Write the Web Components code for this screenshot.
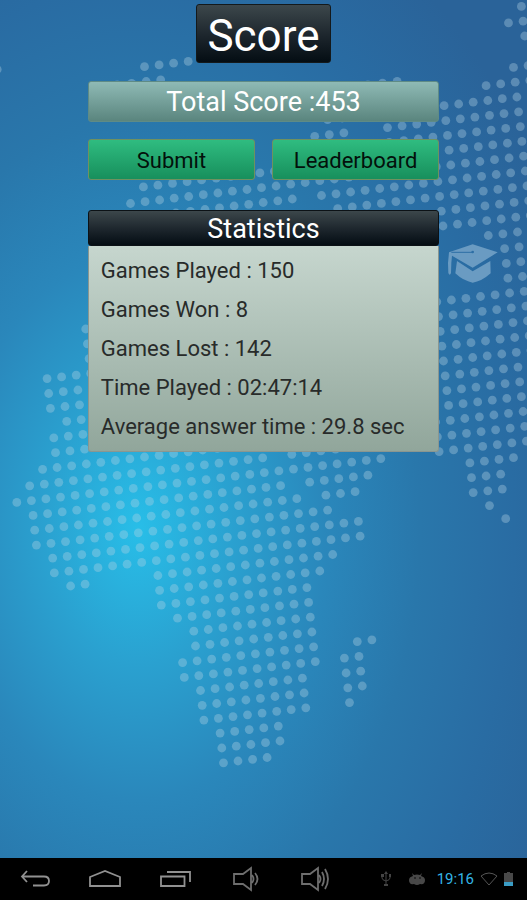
<!DOCTYPE html>
<html lang="en">
<head>
    <meta charset="UTF-8">
    <meta name="viewport" content="width=device-width, initial-scale=1.0">
    <title>Score</title>
    <style>
        body {
            margin: 0;
            min-height: 100vh;
            display: flex;
            flex-direction: column;
            background: #2a6ea6;
            font-family: Roboto, "Noto Sans", sans-serif;
        }

        score-screen {
            flex: 1;
        }
    </style>
</head>
<body>
    <score-screen>
        <screen-title>Score</screen-title>
        <total-score value="453"></total-score>
        <score-actions>
            <green-button>Submit</green-button>
            <green-button>Leaderboard</green-button>
        </score-actions>
        <stats-card heading="Statistics">
            <stat-row label="Games Played" value="150"></stat-row>
            <stat-row label="Games Won" value="8"></stat-row>
            <stat-row label="Games Lost" value="142"></stat-row>
            <stat-row label="Time Played" value="02:47:14"></stat-row>
            <stat-row label="Average answer time" value="29.8 sec"></stat-row>
        </stats-card>
    </score-screen>
    <system-bar time="19:16"></system-bar>

    <script>
        // rows of the dotted map: [row, first, last, first, last, ...]
        const MAP_ROWS = [
            [-37, -7, -7, 29, 30], [-36, 3, 6, 28, 30], [-35, 1, 4, 29, 30], [-34, 30, 31],
            [-33, 18, 20, 28, 30], [-32, 26, 30], [-31, 15, 16, 23, 30], [-30, 14, 16, 19, 30],
            [-29, 19, 30], [-28, 2, 11, 19, 29], [-27, 1, 29], [-26, 4, 12, 14, 29],
            [-25, 15, 29], [-24, 22, 29], [-23, 22, 29], [-22, 25, 29], [-21, 26, 29],
            [-20, 26, 28], [-19, -3, -3, 26, 28], [-18, -3, -3, 21, 28], [-17, -3, -3, 21, 28],
            [-16, -6, -3, 21, 28], [-15, -6, -4, 21, 28], [-14, -6, -4, 21, 28],
            [-13, -5, -4, 21, 28], [-12, -6, -4, 21, 28], [-11, -6, -3, 20, 27],
            [-10, -7, 6, 20, 27], [-9, -8, 8, 10, 13, 20, 27], [-8, -9, 16, 20, 26],
            [-7, -8, 9, 11, 15, 22, 25], [-6, -8, 10, 12, 14, 22, 24], [-5, -8, 12, 22, 24],
            [-4, -7, 14, 23, 23], [-3, -7, 14, 24, 24], [-2, -6, -5, 0, 12], [-1, 0, 11],
            [0, 0, 10], [1, 1, 10], [2, 2, 10], [3, 2, 10], [4, 1, 10, 13, 14],
            [5, 1, 10, 12, 13], [6, 2, 9, 12, 13], [7, 2, 9, 12, 13], [8, 2, 9, 12, 12],
            [9, 3, 7], [10, 3, 7], [11, 3, 6]
        ];

        function mapDots() {
            let dots = '';
            for (const [row, ...spans] of MAP_ROWS) {
                for (let s = 0; s < spans.length; s += 2) {
                    for (let col = spans[s]; col <= spans[s + 1]; col++) {
                        const x = 161.3 + col * 14.56 + row * 1.68;
                        const y = 605.1 - col * 1.75 + row * 14.81;
                        dots += `<circle cx="${x.toFixed(1)}" cy="${y.toFixed(1)}" r="4.4"/>`;
                    }
                }
            }
            return dots;
        }

        class WorldMap extends HTMLElement {
            constructor() {
                super();
                this.attachShadow({ mode: 'open' });
                this.shadowRoot.innerHTML = `
                <style>
                    :host { display: block; }
                    svg { display: block; width: 100%; height: 100%; }
                </style>
                <svg viewBox="0 0 527 858" preserveAspectRatio="xMidYMid slice" aria-hidden="true">
                    <defs>
                        <radialGradient id="glow" gradientUnits="userSpaceOnUse" cx="0" cy="0" r="1"
                            gradientTransform="translate(138 528) scale(470 680)">
                            <stop offset="0" stop-color="#28bee8"/>
                            <stop offset="0.2" stop-color="#2aa1d0"/>
                            <stop offset="0.4" stop-color="#2a87bb"/>
                            <stop offset="0.6" stop-color="#2977ab"/>
                            <stop offset="0.8" stop-color="#296ca3"/>
                            <stop offset="1" stop-color="#2a6399"/>
                        </radialGradient>
                    </defs>
                    <rect x="-600" y="-600" width="1800" height="2100" fill="url(#glow)"/>
                    <g fill="#b4d2e4" fill-opacity="0.36">${mapDots()}</g>
                    <g transform="translate(440 235) scale(0.3333)">
                        <path fill="#6a9bc2" d="M27 52 98 28 173 52 98 98 36 62 34 84 33 114Q29 124 25 114L24 84Z"/>
                        <path fill="#6a9bc2" d="M51 78 98 109 151 78 152 115Q124 140 98 143 70 138 46 115Z"/>
                        <path fill="none" stroke="#2d6ea5" stroke-width="3" d="M34 52H98"/>
                        <circle cx="98" cy="51" r="4" fill="#2d6ea5"/>
                    </g>
                </svg>
                `
            }
        }

        customElements.define('world-map', WorldMap)

        class ScoreScreen extends HTMLElement {
            constructor() {
                super();
                this.attachShadow({ mode: 'open' });
                this.shadowRoot.innerHTML = `
                <style>
                    :host {
                        display: grid;
                        position: relative;
                        overflow: hidden;
                    }

                    /* the map lies behind everything else */
                    world-map {
                        position: absolute;
                        inset: 0;
                    }

                    main {
                        position: relative;
                        display: grid;
                        grid-template-columns: 1fr 4fr 1fr;
                        align-content: start;
                        padding: 4px 0 24px;
                    }

                    ::slotted(*) {
                        grid-column: 2;
                    }
                </style>
                <world-map></world-map>
                <main><slot></slot></main>
                `
            }
        }

        customElements.define('score-screen', ScoreScreen)

        class ScreenTitle extends HTMLElement {
            constructor() {
                super();
                this.attachShadow({ mode: 'open' });
                this.shadowRoot.innerHTML = `
                <style>
                    :host {
                        display: block;
                        justify-self: center;
                        margin-bottom: 18px;
                    }

                    h1 {
                        box-sizing: border-box;
                        margin: 0;
                        padding: 2px 10px 0;
                        height: 59px;
                        border: 1px solid #14191b;
                        border-radius: 3px;
                        background: linear-gradient(#3c474b, #1c252c 55%, #040d13);
                        color: #fff;
                        font-size: 44px;
                        font-weight: 400;
                        line-height: 58px;
                    }
                </style>
                <h1><slot></slot></h1>
                `
            }
        }

        customElements.define('screen-title', ScreenTitle)

        class TotalScore extends HTMLElement {
            constructor() {
                super();
                this.attachShadow({ mode: 'open' });
                this.shadowRoot.innerHTML = `
                <style>
                    :host {
                        display: block;
                        box-sizing: border-box;
                        height: 41px;
                        margin-bottom: 17px;
                        border: 1px solid #5f8b86;
                        border-radius: 3px;
                        background: linear-gradient(#8fbab5, #5a857e);
                        color: #fff;
                        font-size: 27px;
                        line-height: 40px;
                        text-align: center;
                    }
                </style>
                Total Score :${this.getAttribute('value')}
                `
            }
        }

        customElements.define('total-score', TotalScore)

        class ScoreActions extends HTMLElement {
            constructor() {
                super();
                this.attachShadow({ mode: 'open' });
                this.shadowRoot.innerHTML = `
                <style>
                    :host {
                        display: grid;
                        grid-template-columns: 1fr 1fr;
                        gap: 17px;
                        margin-bottom: 30px;
                    }
                </style>
                <slot></slot>
                `
            }
        }

        customElements.define('score-actions', ScoreActions)

        class GreenButton extends HTMLElement {
            constructor() {
                super();
                this.attachShadow({ mode: 'open' });
                this.shadowRoot.innerHTML = `
                <style>
                    :host { display: block; }

                    button {
                        display: block;
                        box-sizing: border-box;
                        width: 100%;
                        height: 41px;
                        padding: 2px 0 0;
                        border: 1px solid #6f9160;
                        border-radius: 3px;
                        background: linear-gradient(#2fbc80, #178f5c);
                        color: #03110b;
                        font-family: inherit;
                        font-size: 22px;
                        cursor: pointer;
                    }

                    button:active { background: #178f5c; }
                </style>
                <button type="button"><slot></slot></button>
                `
            }
        }

        customElements.define('green-button', GreenButton)

        class StatsCard extends HTMLElement {
            constructor() {
                super();
                this.attachShadow({ mode: 'open' });
                this.shadowRoot.innerHTML = `
                <style>
                    :host { display: block; }

                    h2 {
                        box-sizing: border-box;
                        height: 36px;
                        margin: 0;
                        border: 1px solid #0c1216;
                        border-radius: 3px;
                        background: linear-gradient(#3c474b, #1c252c 55%, #040d13);
                        color: #fff;
                        font-size: 27px;
                        font-weight: 400;
                        line-height: 36px;
                        text-align: center;
                    }

                    .rows {
                        padding: 5px 12px;
                        border: solid #8a9690;
                        border-width: 0 1px 1px;
                        border-radius: 0 0 3px 3px;
                        background: linear-gradient(#c6d6ce, #91a69b);
                    }
                </style>
                <h2>${this.getAttribute('heading')}</h2>
                <div class="rows"><slot></slot></div>
                `
            }
        }

        customElements.define('stats-card', StatsCard)

        class StatRow extends HTMLElement {
            constructor() {
                super();
                this.attachShadow({ mode: 'open' });
                this.shadowRoot.innerHTML = `
                <style>
                    :host {
                        display: block;
                        color: #282b2a;
                        font-size: 22px;
                        line-height: 39px;
                    }
                </style>
                ${this.getAttribute('label')} : ${this.getAttribute('value')}
                `
            }
        }

        customElements.define('stat-row', StatRow)

        class SystemBar extends HTMLElement {
            constructor() {
                super();
                this.attachShadow({ mode: 'open' });
                this.shadowRoot.innerHTML = `
                <style>
                    :host {
                        display: flex;
                        justify-content: space-between;
                        height: 42px;
                        background: #000;
                    }

                    nav, .status {
                        display: flex;
                        align-items: center;
                    }

                    button {
                        width: 70px;
                        height: 42px;
                        padding: 0;
                        border: 0;
                        background: none;
                        cursor: pointer;
                    }

                    svg {
                        display: block;
                        margin: auto;
                        fill: none;
                    }

                    nav svg {
                        stroke: #919191;
                        stroke-width: 1.8;
                    }

                    nav .volume {
                        stroke: #6e6e6e;
                    }

                    .status {
                        gap: 6px;
                        padding-right: 14px;
                        color: #33b5e5;
                        font-size: 15px;
                    }

                    .notices {
                        display: flex;
                        gap: 18px;
                        margin-right: 6px;
                    }
                </style>
                <nav>
                    <button type="button" aria-label="Back">
                        <svg width="32" height="20" viewBox="0 0 32 20"><path d="M8 2 3 7.500 8 13M3 7.500H25Q30 7.500 30 12T25 16.500H14"/></svg>
                    </button>
                    <button type="button" aria-label="Home">
                        <svg width="34" height="20" viewBox="0 0 34 20"><path d="M2 17V8L17 2 32 8V17Z"/></svg>
                    </button>
                    <button type="button" aria-label="Recent apps">
                        <svg width="32" height="20" viewBox="0 0 32 20"><path d="M2 7.500H25.500V17H2ZM8 3H31V13"/></svg>
                    </button>
                    <button type="button" aria-label="Volume down">
                        <svg class="volume" width="28" height="26" viewBox="0 0 28 26"><path d="M3 8H12L20 2V24L12 18H3ZM21 9Q24 13 21 17M24 7Q29 13 24 19"/></svg>
                    </button>
                    <button type="button" aria-label="Volume up">
                        <svg class="volume" width="30" height="26" viewBox="0 0 30 26"><path d="M2 8H10L18 2V24L10 18H2ZM19 9Q22 13 19 17M22 6Q26 13 22 20M25 3Q31 13 25 23"/></svg>
                    </button>
                </nav>
                <div class="status">
                    <div class="notices">
                        <svg width="10" height="16" viewBox="0 0 10 16"><path stroke="#444" d="M5 2V14M1 4V7Q1 9 5 10Q9 9 9 7V4"/><path fill="#444" d="M3 3 5 0 7 3ZM0 3H3V6H0ZM8 3H10V6H8ZM3 13H7V15H3Z"/></svg>
                        <svg width="16" height="14" viewBox="0 0 16 14"><path fill="#484848" d="M3 1 5 3Q8 2 11 3L13 1 12 4Q16 5 16 8 16 13 11 12 8 14 5 12 0 13 0 8 0 5 4 4Z"/><circle cx="6" cy="6" r="0.8" fill="#000"/><circle cx="11" cy="6" r="0.8" fill="#000"/></svg>
                    </div>
                    <time>${this.getAttribute('time')}</time>
                    <svg width="18" height="14" viewBox="0 0 18 14"><path stroke="#555" d="M1 4Q9-2 17 4L9 13Z"/></svg>
                    <svg width="9" height="14" viewBox="0 0 9 14"><path fill="#484848" d="M3 0H6V1H9V10H0V1H3Z"/><path fill="#3a9cc4" d="M0 10H9V14H0Z"/></svg>
                </div>
                `
            }
        }

        customElements.define('system-bar', SystemBar)
    </script>
</body>
</html>
